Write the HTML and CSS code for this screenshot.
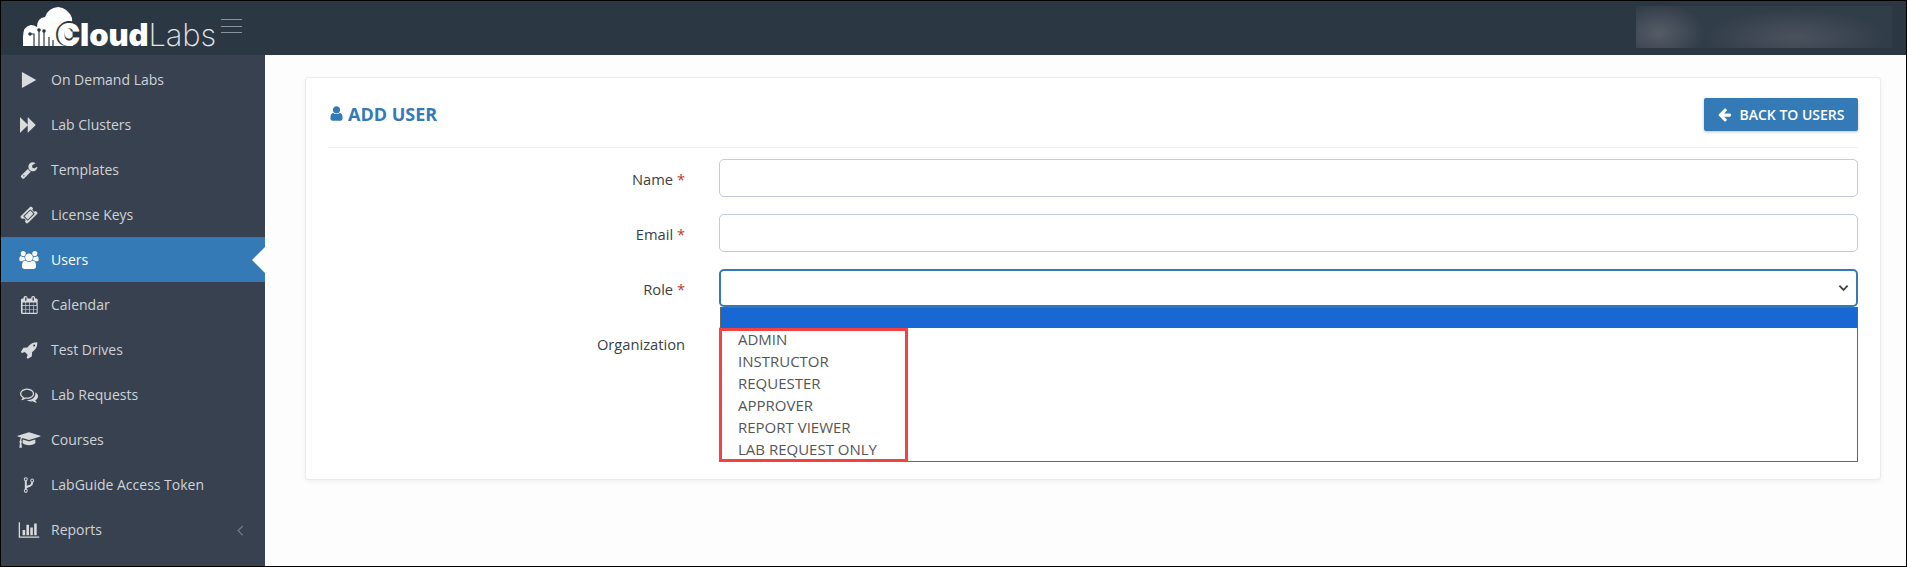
FILE: index.html
```html
<!DOCTYPE html>
<html lang="en">
<head>
  <meta charset="UTF-8">
  <title>CloudLabs - Add User</title>
  <link rel="stylesheet" href="styles.css">
</head>
<body>
  <div class="topbar">
    <div class="logo">
      <svg class="logo-cloud" viewBox="0 0 50 39" aria-hidden="true">
        <path fill="#fff" d="M0 39V30Q0 19 8 18Q11 18 14 20Q14 11 22 10Q25 1 35 0Q45 1 49 11L50 39Z"/>
        <path fill="none" stroke="#2c3744" stroke-width="1.2" d="M8 27H11V39M16 24V39M21 25V39M26 30V39M30 33V39"/>
        <circle cx="7" cy="27" r="1.8" fill="#2c3744"/>
        <circle cx="16" cy="23" r="1.8" fill="#2c3744"/>
        <circle cx="21" cy="24" r="1.8" fill="#2c3744"/>
      </svg>
      <span class="logo-text"><b>Cloud</b>Labs</span>
    </div>
    <div class="hamburger"><i></i><i></i><i></i></div>
    <div class="user-blur"></div>
  </div>
  <div class="layout">
    <ul class="sidebar">
      <li><svg viewBox="0 0 1792 1792"><path d="M1576 927l-1328 738q-23 13-39.5 3t-16.5-36v-1472q0-26 16.5-36t39.5 3l1328 738q23 13 23 31t-23 31z"/></svg>On Demand Labs</li>
      <li><svg viewBox="0 0 1792 1792"><path d="M45 1651q-19 19-32 13t-13-32v-1472q0-26 13-32t32 13l710 710q9 9 13 19v-710q0-26 13-32t32 13l710 710q19 19 19 45t-19 45l-710 710q-19 19-32 13t-13-32v-710q-4 10-13 19z"/></svg>Lab Clusters</li>
      <li><svg viewBox="0 0 1792 1792"><path d="M448 1472q0-26-19-45t-45-19-45 19-19 45 19 45 45 19 45-19 19-45zm644-420l-682 682q-37 37-90 37-52 0-91-37l-106-108q-38-36-38-90 0-53 38-91l681-681q39 98 114.5 173.5t173.5 114.5zm634-435q0 39-23 106-47 134-164.5 217.5t-258.5 83.5q-185 0-316.5-131.5t-131.5-316.5 131.5-316.5 316.5-131.5q58 0 121.5 16.5t107.5 46.5q16 11 16 28t-16 28l-293 169v224l193 107q5-3 79-48.5t135.5-81 70.5-35.5q15 0 23.5 10t8.5 25z"/></svg>Templates</li>
      <li><svg viewBox="0 0 1792 1792"><path d="M1024 452l316 316-572 572-316-316zm-211 979l618-618q19-19 19-45t-19-45l-362-362q-18-18-45-18t-45 18l-618 618q-19 19-19 45t19 45l362 362q18 18 45 18t45-18zm889-637l-907 908q-37 37-90.5 37t-90.5-37l-126-126q56-56 56-136t-56-136-136-56-136 56l-125-126q-37-37-37-90.5t37-90.5l907-906q37-37 90.5-37t90.5 37l125 125q-56 56-56 136t56 136 136 56 136-56l126 125q37 37 37 90.5t-37 90.5z"/></svg>License Keys</li>
      <li class="active"><svg viewBox="0 0 1920 1792"><path d="M593 896q-162 5-265 128h-134q-82 0-138-40.5t-56-118.5q0-353 124-353 6 0 43.5 21t97.5 42.5 119 21.5q67 0 133-23-5 37-5 66 0 139 81 256zm1071 637q0 120-73 189.5t-194 69.5h-874q-121 0-194-69.5t-73-189.5q0-53 3.5-103.5t14-109 26.5-108.5 43-97.5 62-81 85.5-53.5 111.5-20q10 0 43 21.5t73 48 107 48 135 21.5 135-21.5 107-48 73-48 43-21.5q61 0 111.5 20t85.5 53.5 62 81 43 97.5 26.5 108.5 14 109 3.5 103.5zm-1024-1277q0 106-75 181t-181 75-181-75-75-181 75-181 181-75 181 75 75 181zm704 384q0 159-112.5 271.5t-271.5 112.5-271.5-112.5-112.5-271.5 112.5-271.5 271.5-112.5 271.5 112.5 112.5 271.5zm576 225q0 78-56 118.5t-138 40.5h-134q-103-123-265-128 81-117 81-256 0-29-5-66 66 23 133 23 59 0 119-21.5t97.5-42.5 43.5-21q124 0 124 353zm-128-609q0 106-75 181t-181 75-181-75-75-181 75-181 181-75 181 75 75 181z"/></svg>Users</li>
      <li><svg viewBox="0 0 1664 1792"><path d="M192 1664h288v-288h-288v288zm352 0h320v-288h-320v288zm-352-352h288v-320h-288v320zm352 0h320v-320h-320v320zm-352-384h288v-288h-288v288zm736 736h320v-288h-320v288zm-384-736h320v-288h-320v288zm768 736h288v-288h-288v288zm-384-352h320v-320h-320v320zm-352-864v-288q0-13-9.5-22.5t-22.5-9.5h-64q-13 0-22.5 9.5t-9.5 22.5v288q0 13 9.5 22.5t22.5 9.5h64q13 0 22.5-9.5t9.5-22.5zm736 864h288v-320h-288v320zm-384-384h320v-288h-320v288zm352 0h288v-288h-288v288zm32-480v-288q0-13-9.5-22.5t-22.5-9.5h-64q-13 0-22.5 9.5t-9.5 22.5v288q0 13 9.5 22.5t22.5 9.5h64q13 0 22.5-9.5t9.5-22.5zm384-64v1280q0 52-38 90t-90 38h-1408q-52 0-90-38t-38-90v-1280q0-52 38-90t90-38h128v-96q0-66 47-113t113-47h64q66 0 113 47t47 113v96h384v-96q0-66 47-113t113-47h64q66 0 113 47t47 113v96h128q52 0 90 38t38 90z"/></svg>Calendar</li>
      <li><svg viewBox="0 0 1792 1792"><path d="M1504 448q0-40-28-68t-68-28-68 28-28 68 28 68 68 28 68-28 28-68zm224-288q0 249-75.5 430.5t-253.5 360.5q-81 80-195 176l-20 379q-2 16-16 26l-384 224q-7 4-16 4-12 0-23-9l-64-64q-13-14-8-32l85-276-281-281-276 85q-3 1-9 1-14 0-23-9l-64-64q-17-19-5-39l224-384q10-14 26-16l379-20q96-114 176-195 188-187 358-258t431-71q14 0 24 9.5t10 22.5z"/></svg>Test Drives</li>
      <li><svg viewBox="0 0 1792 1792"><path d="M704 384q-153 0-286 52t-211.5 141-78.5 191q0 82 53 158t149 132l97 56-35 84q34-20 62-39l44-31 53 10q78 14 153 14 153 0 286-52t211.5-141 78.5-191-78.5-191-211.5-141-286-52zm0-128q191 0 353.5 68.5t256.5 186.5 94 257-94 257-256.5 186.5-353.5 68.5q-86 0-176-16-124 88-278 128-36 9-86 16h-3q-11 0-20.5-8t-11.5-21q-1-3-1-6.5t.5-6.5 2-6l2.5-5 3.5-5.5 4-5 4.5-5 4-4.5q5-6 23-25t26-29.5 22.5-29 25-38.5 20.5-44q-124-72-195-177t-71-224q0-139 94-257t256.5-186.5 353.5-68.5zm822 1169q10 24 20.5 44t25 38.5 22.5 29 26 29.5 23 25q1 1 4 4.5t4.5 5 4 5 3.5 5.5l2.5 5 2 6 .5 6.5-1 6.5q-3 14-13 22t-22 7q-50-7-86-16-154-40-278-128-90 16-176 16-271 0-472-132 58 4 88 4 161 0 309-45t264-129q125-92 192-212t67-254q0-77-23-152 129 71 204 178t75 230q0 120-71 224.5t-195 176.5z"/></svg>Lab Requests</li>
      <li><svg viewBox="0 0 2304 1792"><path d="M1774 836l18 316q4 69-82 128t-235 93.5-323 34.5-323-34.5-235-93.5-82-128l18-316 574 181q22 7 48 7t48-7zm530-324q0 23-22 31l-1120 352q-4 1-10 1t-10-1l-652-206q-43 34-71 111.5t-34 178.5q63 36 63 109 0 69-58 107l58 433q2 14-8 25-9 11-24 11h-192q-15 0-24-11-10-11-8-25l58-433q-58-38-58-107 0-73 65-111 11-207 98-330l-333-104q-22-8-22-31t22-31l1120-352q4-1 10-1t10 1l1120 352q22 8 22 31z"/></svg>Courses</li>
      <li><svg viewBox="0 0 1792 1792"><path d="M672 1472q0-40-28-68t-68-28-68 28-28 68 28 68 68 28 68-28 28-68zm0-1152q0-40-28-68t-68-28-68 28-28 68 28 68 68 28 68-28 28-68zm640 128q0-40-28-68t-68-28-68 28-28 68 28 68 68 28 68-28 28-68zm96 0q0 52-26 96.5t-70 69.5q-2 287-226 414-67 38-203 81-128 40-169.5 71t-41.5 100v26q44 25 70 69.5t26 96.5q0 80-56 136t-136 56-136-56-56-136q0-52 26-96.5t70-69.5v-820q-44-25-70-69.5t-26-96.5q0-80 56-136t136-56 136 56 56 136q0 52-26 96.5t-70 69.5v497q54-26 154-57 55-17 87.5-29.5t70.5-31 59-39.5 40.5-51 28-69.5 8.5-91.5q-44-25-70-69.5t-26-96.5q0-80 56-136t136-56 136 56 56 136z"/></svg>LabGuide Access Token</li>
      <li><svg viewBox="0 0 2048 1792"><path d="M640 896v512h-256v-512h256zm384-512v1024h-256v-1024h256zm1024 1152v128h-2048v-1536h128v1408h1920zm-640-896v768h-256v-768h256zm384-384v1152h-256v-1152h256z"/></svg>Reports<svg class="caret" viewBox="0 0 1792 1792"><path d="M1203 544q0 13-10 23l-393 393 393 393q10 10 10 23t-10 23l-50 50q-10 10-23 10t-23-10l-466-466q-10-10-10-23t10-23l466-466q10-10 23-10t23 10l50 50q10 10 10 23z"/></svg></li>
    </ul>
    <div class="content">
      <div class="card">
        <div class="card-head">
          <h1 class="card-title"><svg viewBox="0 0 1792 1792"><path d="M1536 1399q0 109-62.5 187t-150.5 78h-854q-88 0-150.5-78t-62.5-187q0-85 8.5-160.5t31.5-152 58.5-131 94-89 134.5-34.5q131 128 313 128t313-128q76 0 134.5 34.5t94 89 58.5 131 31.5 152 8.5 160.5zm-256-887q0 159-112.5 271.5t-271.5 112.5-271.5-112.5-112.5-271.5 112.5-271.5 271.5-112.5 271.5 112.5 112.5 271.5z"/></svg>ADD USER</h1>
          <button class="btn-back"><svg viewBox="0 0 1792 1792"><path d="M1664 896v128q0 53-32.5 90.5t-84.5 37.5h-704l293 294q38 36 38 90t-38 90l-75 76q-37 37-90 37-52 0-91-37l-651-652q-37-37-37-90 0-52 37-91l651-650q38-38 91-38 52 0 90 38l75 74q38 38 38 91t-38 91l-293 293h704q52 0 84.5 37.5t32.5 90.5z"/></svg>BACK TO USERS</button>
        </div>
        <div class="form">
          <label class="form-label">Name <span class="req">*</span></label>
          <input class="form-input" type="text">
          <label class="form-label">Email <span class="req">*</span></label>
          <input class="form-input" type="text">
          <label class="form-label">Role <span class="req">*</span></label>
          <div class="select-wrap">
            <div class="form-input focused"></div>
            <svg class="chevron" viewBox="0 0 12 8"><path d="M1.5 1.5L6 6l4.5-4.5" fill="none" stroke="#444" stroke-width="2"/></svg>
            <div class="dropdown">
              <div class="dropdown-blank"></div>
              <div class="dropdown-list">
                <div>ADMIN</div>
                <div>INSTRUCTOR</div>
                <div>REQUESTER</div>
                <div>APPROVER</div>
                <div>REPORT VIEWER</div>
                <div>LAB REQUEST ONLY</div>
              </div>
              <div class="highlight"></div>
            </div>
          </div>
          <label class="form-label">Organization</label>
          <input class="form-input" type="text">
        </div>
      </div>
    </div>
  </div>
</body>
</html>
```

FILE: styles.css
```css
* {
  box-sizing: border-box;
}
html, body {
  height: 100%;
}
body {
  margin: 0;
  height: 567px;
  overflow: hidden;
  border: 1px solid #000;
  background: #fdfdfd;
  font-family: "Open Sans", "Liberation Sans", sans-serif;
  font-size: 14px;
  color: #333;
}
.topbar {
  height: 54px;
  background: #2c3744;
  display: flex;
  align-items: flex-start;
  position: relative;
}
.logo {
  display: flex;
  align-items: flex-end;
  margin: 6px 0 0 22px;
  height: 39px;
}
.logo-cloud {
  width: 50px;
  height: 39px;
  display: block;
  flex-shrink: 0;
}
.logo-text {
  margin: 0 0 -7px -16px;
  font-family: Inter, "Open Sans", sans-serif;
  font-size: 31px;
  line-height: 36px;
  font-weight: 200;
  color: #e4e6e9;
  letter-spacing: -0.1px;
  white-space: nowrap;
}
.logo-text b {
  font-weight: 900;
  color: #fff;
  text-shadow: -2px 0 #2c3744, 0 -2px #2c3744;
}
.hamburger {
  margin: 18px 0 0 5px;
  width: 21px;
  display: flex;
  flex-direction: column;
  gap: 5.5px;
}
.hamburger i {
  display: block;
  height: 1px;
  background: #8b939c;
}
.user-blur {
  position: absolute;
  left: 1635px;
  top: 5px;
  width: 256px;
  height: 42px;
  background:
    radial-gradient(ellipse 45px 30px at 9% 65%, #555c66, transparent),
    radial-gradient(ellipse 90px 28px at 62% 75%, #4a525d, transparent),
    #323d4a;
}
.layout {
  display: flex;
  height: 511px;
}
.sidebar {
  width: 264px;
  margin: 0;
  padding: 2px 0 0;
  list-style: none;
  background: #37414f;
  flex-shrink: 0;
}
.sidebar li {
  height: 45px;
  display: flex;
  align-items: center;
  padding-left: 16px;
  color: #d0d3d7;
  position: relative;
}
.sidebar li svg {
  height: 18px;
  width: 24px;
  margin-right: 10px;
  fill: #d8dadc;
  flex-shrink: 0;
}
.sidebar li.active {
  background: #337ab7;
  color: #fff;
}
.sidebar li.active svg {
  fill: #fff;
}
.sidebar li.active::after {
  content: "";
  position: absolute;
  right: 0;
  top: 50%;
  margin-top: -13px;
  border-style: solid;
  border-width: 13px 13px 13px 0;
  border-color: transparent #fdfdfd transparent transparent;
}
.sidebar li svg.caret {
  position: absolute;
  left: 230px;
  top: 14px;
  width: 18px;
  margin: 0;
  fill: #6f7a87;
}
.content {
  flex: 1;
  padding: 22px 25px 0 40px;
}
.card {
  height: 403px;
  background: #fff;
  border: 1px solid #e9ebee;
  border-radius: 3px;
  box-shadow: 0 2px 5px rgba(0, 20, 60, 0.05);
  padding: 20px 22px 0;
}
.card-head {
  display: flex;
  justify-content: space-between;
  align-items: center;
  padding-bottom: 16px;
  border-bottom: 1px solid #eceef0;
  margin-bottom: 11px;
}
.card-title {
  margin: -2px 0 0;
  font-size: 18px;
  font-weight: 700;
  color: #337ab7;
  display: flex;
  align-items: center;
}
.card-title svg {
  width: 17px;
  height: 17px;
  margin-right: 3px;
  fill: #337ab7;
}
.btn-back {
  width: 154px;
  height: 33px;
  padding-bottom: 2px;
  border: none;
  border-radius: 2px;
  background: #337ab7;
  box-shadow: 0 1px 3px rgba(0, 0, 0, 0.25);
  color: #fff;
  font-family: inherit;
  font-size: 14px;
  font-weight: 600;
  display: flex;
  align-items: center;
  justify-content: center;
  gap: 7px;
}
.btn-back svg {
  width: 15px;
  height: 15px;
  fill: #fff;
}
.form {
  display: grid;
  grid-template-columns: 357px 1fr;
  column-gap: 34px;
  row-gap: 17px;
  align-items: center;
}
.form-label {
  text-align: right;
  font-size: 14.7px;
  color: #3a3f46;
  padding-top: 1px;
}
.req {
  color: #c0392b;
}
.form-input {
  display: block;
  width: 100%;
  height: 38px;
  border: 1px solid #c4cad8;
  border-radius: 5px;
  background: #fff;
}
.form-input.focused {
  border: 2px solid #337ab7;
}
.select-wrap {
  position: relative;
}
.chevron {
  position: absolute;
  right: 9px;
  top: 15px;
  width: 11px;
  height: 8px;
}
.dropdown {
  position: absolute;
  left: 1px;
  right: 0;
  top: 38px;
  height: 155px;
  border: 1px solid #666;
  background: #fff;
  z-index: 5;
}
.dropdown-blank {
  height: 20px;
  background: #1967d2;
}
.dropdown-list {
  padding-left: 17px;
  font-size: 15px;
  line-height: 22px;
  color: #555;
}
.highlight {
  position: absolute;
  left: -2px;
  top: 20px;
  width: 189px;
  height: 134px;
  border: 3px solid #f44242;
}
```
